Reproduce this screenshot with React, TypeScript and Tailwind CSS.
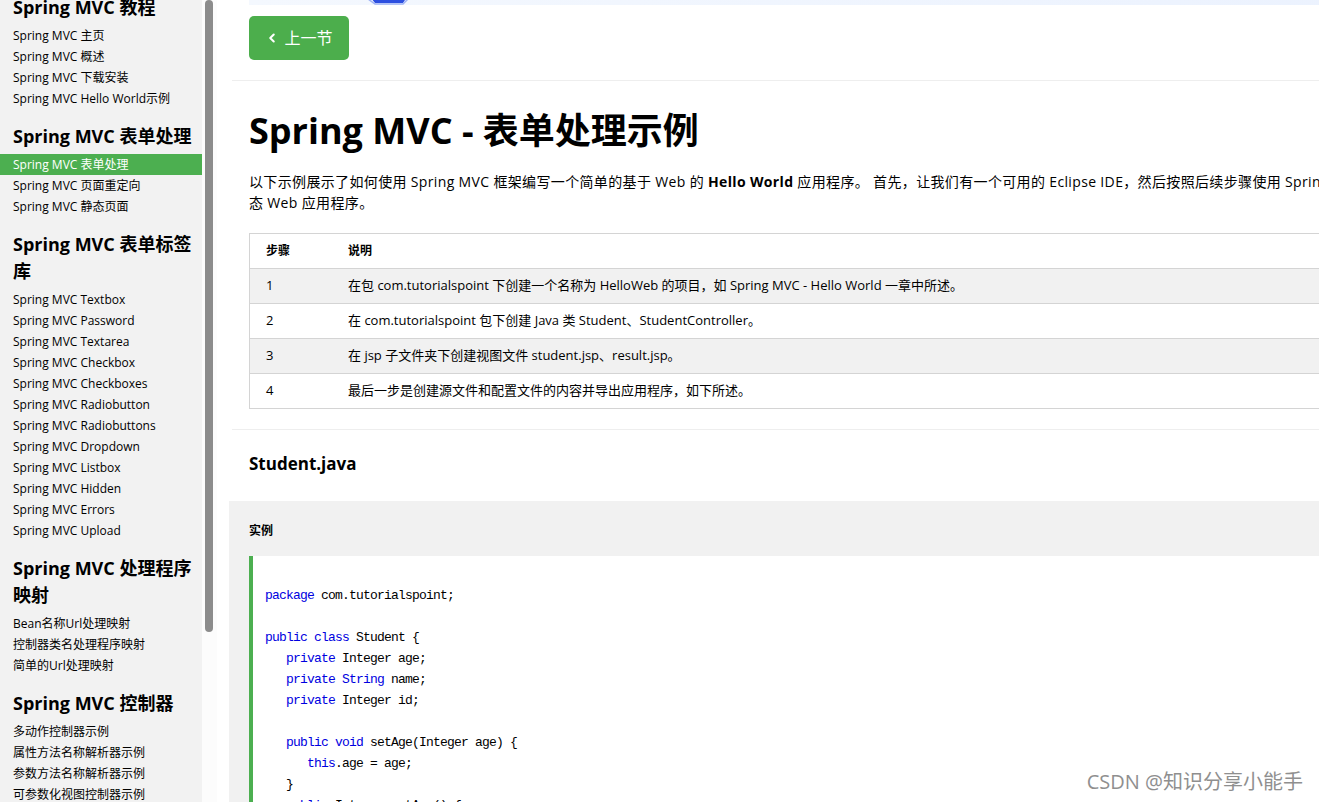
import { ChevronLeft } from 'lucide-react';

interface NavSection {
  title: string[];
  items: string[];
}

const SECTIONS: NavSection[] = [
  {
    title: ['Spring MVC 教程'],
    items: ['Spring MVC 主页', 'Spring MVC 概述', 'Spring MVC 下载安装', 'Spring MVC Hello World示例'],
  },
  {
    title: ['Spring MVC 表单处理'],
    items: ['Spring MVC 表单处理', 'Spring MVC 页面重定向', 'Spring MVC 静态页面'],
  },
  {
    title: ['Spring MVC 表单标签', '库'],
    items: [
      'Spring MVC Textbox',
      'Spring MVC Password',
      'Spring MVC Textarea',
      'Spring MVC Checkbox',
      'Spring MVC Checkboxes',
      'Spring MVC Radiobutton',
      'Spring MVC Radiobuttons',
      'Spring MVC Dropdown',
      'Spring MVC Listbox',
      'Spring MVC Hidden',
      'Spring MVC Errors',
      'Spring MVC Upload',
    ],
  },
  {
    title: ['Spring MVC 处理程序', '映射'],
    items: ['Bean名称Url处理映射', '控制器类名处理程序映射', '简单的Url处理映射'],
  },
  {
    title: ['Spring MVC 控制器'],
    items: ['多动作控制器示例', '属性方法名称解析器示例', '参数方法名称解析器示例', '可参数化视图控制器示例'],
  },
];

const ACTIVE = 'Spring MVC 表单处理';

const STEPS = [
  ['1', '在包 com.tutorialspoint 下创建一个名称为 HelloWeb 的项目，如 Spring MVC - Hello World 一章中所述。'],
  ['2', '在 com.tutorialspoint 包下创建 Java 类 Student、StudentController。'],
  ['3', '在 jsp 子文件夹下创建视图文件 student.jsp、result.jsp。'],
  ['4', '最后一步是创建源文件和配置文件的内容并导出应用程序，如下所述。'],
];

// each code line is a list of [text, isKeyword]
type Tok = [string, boolean?];
const CODE: Tok[][] = [
  [],
  [['package', true], [' com.tutorialspoint;']],
  [],
  [['public class', true], [' Student {']],
  [['   '], ['private', true], [' Integer age;']],
  [['   '], ['private String', true], [' name;']],
  [['   '], ['private', true], [' Integer id;']],
  [],
  [['   '], ['public void', true], [' setAge(Integer age) {']],
  [['      '], ['this', true], ['.age = age;']],
  [['   }']],
  [['   '], ['public', true], [' Integer getAge() {']],
];

function Sidebar() {
  return (
    <div className="w-[202px] shrink-0 bg-[#f2f2f2] text-black overflow-hidden">
      <div className="mt-[-20px]">
        {SECTIONS.map((s) => (
          <div key={s.title.join('')}>
            <h2 className="mt-[14px] mb-[4px] px-[13px] text-[18px] font-bold leading-[27px] whitespace-nowrap">
              {s.title.map((t) => (
                <div key={t}>{t}</div>
              ))}
            </h2>
            {s.items.map((item) => (
              <div
                key={item}
                className={`px-[13px] text-[12px] leading-[21px] whitespace-nowrap ${
                  item === ACTIVE ? 'bg-[#4caf50] text-white' : ''
                }`}
              >
                {item}
              </div>
            ))}
          </div>
        ))}
      </div>
    </div>
  );
}

export default function App() {
  return (
    <div
      className="relative flex w-[1319px] h-[802px] overflow-hidden bg-white text-black"
      style={{ fontFamily: '"Open Sans", "Noto Sans CJK SC", sans-serif' }}
    >
      <Sidebar />

      {/* scrollbar */}
      <div className="w-[15px] shrink-0 bg-[#fcfcfc]">
        <div className="ml-[3px] w-[8px] h-[632px] rounded-full bg-[#8c8c8c]" />
      </div>

      {/* main */}
      <div className="ml-[12px] w-[1320px] shrink-0">
        {/* bottom edge of banner */}
        <div className="relative ml-[20px] h-[5px] bg-gradient-to-r from-[#f4f8fe] to-[#eaf1fe] overflow-hidden">
          <svg className="absolute left-[112px] top-[-12px]" width="56" height="17" viewBox="0 0 56 17">
            <path d="M2 0 L52 0 L42 15 L14 15 Z" fill="#2d4fe0" />
            <path d="M0 6 L14 16 L42 16 L48 10" stroke="#9fb2f5" strokeWidth="1.5" fill="none" />
          </svg>
        </div>

        <div className="ml-[20px] mt-[11px] flex h-[44px] w-[100px] items-center justify-center gap-[5px] rounded-[5px] bg-[#4cae4c] text-[16px] text-white">
          <ChevronLeft size={14} strokeWidth={3.5} />
          <span>上一节</span>
        </div>

        <div className="mt-[20px] ml-[3px] h-px bg-[#eeeeee]" />

        <div className="pl-[20px]">
          <h1 className="mt-[28px] text-[36px] font-bold leading-[44px] whitespace-nowrap">
            Spring MVC - 表单处理示例
          </h1>

          <div className="mt-[18px] text-[14px] leading-[21px] tracking-[0.35px] whitespace-nowrap">
            <div>
              以下示例展示了如何使用 Spring MVC 框架编写一个简单的基于 Web 的 <b>Hello World</b> 应用程序。
              首先，让我们有一个可用的 Eclipse IDE，然后按照后续步骤使用 Spring Web Framework 开发基于动
            </div>
            <div>态 Web 应用程序。</div>
          </div>

          <div className="mt-[20px] w-[1250px] border border-[#d4d4d4] text-[13px]">
            <div className="flex h-[34px] items-center text-[12px] font-bold">
              <div className="w-[98px] pl-[16px]">步骤</div>
              <div>说明</div>
            </div>
            {STEPS.map(([n, text], i) => (
              <div
                key={n}
                className={`flex h-[35px] items-center border-t border-[#d4d4d4] ${
                  i % 2 === 0 ? 'bg-[#f1f1f1]' : 'bg-white'
                }`}
              >
                <div className="w-[98px] pl-[16px]">{n}</div>
                <div className="whitespace-nowrap">{text}</div>
              </div>
            ))}
          </div>
        </div>

        <div className="mt-[20px] ml-[3px] h-px bg-[#eeeeee]" />

        <h3 className="ml-[20px] mt-[22px] text-[17px] font-bold leading-[24px]">Student.java</h3>

        <div className="mt-[25px] bg-[#f1f1f1] pl-[20px] pt-[21px]">
          <div className="text-[12px] font-bold leading-[18px]">实例</div>
          <div className="mt-[16px] border-l-4 border-[#4caf50] bg-white pl-[12px] pt-[8px] pb-[20px]">
            <pre
              className="text-[13px] leading-[21px] tracking-[-0.8px] text-black"
              style={{ fontFamily: '"Liberation Mono", monospace' }}
            >
              {CODE.map((line, i) => (
                <div key={i} className="h-[21px]">
                  {line.map(([t, kw], j) => (
                    <span key={j} className={kw ? 'text-[#0000e0]' : ''}>
                      {t}
                    </span>
                  ))}
                </div>
              ))}
            </pre>
          </div>
        </div>
      </div>

      {/* watermark */}
      <div
        className="absolute right-[16px] bottom-[6px] text-[20px] leading-[28px] text-[#8f8f8f]"
        style={{ textShadow: '0 0 2px #fff, 0 0 2px #fff' }}
      >
        CSDN @知识分享小能手
      </div>
    </div>
  );
}
